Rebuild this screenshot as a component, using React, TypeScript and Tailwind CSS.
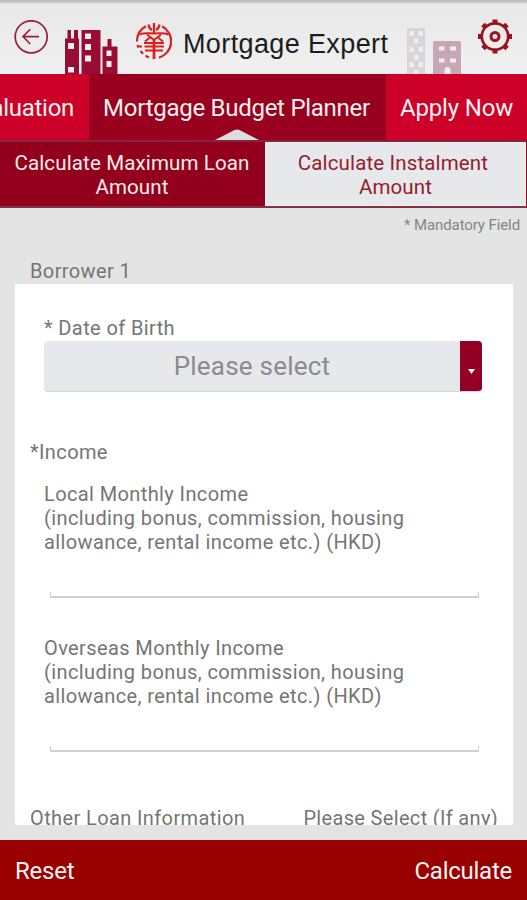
// File: src/App.tsx
// Mortgage budget planner screen

import { memo } from 'react';

const BackIcon = () => (
    <svg className="mt-5 ml-3.5 h-[35px] w-[35px] shrink-0" viewBox="0 0 35 35" fill="none" stroke="#9c1c38">
        <circle cx="17.2" cy="16.8" r="16" strokeWidth="1.7" />
        <path d="M25 16.6H9.5M16.2 9.3L9 16.6l7.2 7.4" strokeWidth="1.6" />
    </svg>
);

const RedBuildings = () => (
    <svg className="ml-[15px] h-[74px] w-[54px] shrink-0" viewBox="0 0 54 74">
        <g fill="#990c33">
            <path d="M1 38.5h2.5V30h3.5v8.5h3V30h4v8.5h1V74H1z" />
            <path d="M17.5 30h19v44h-19z" />
            <path d="M38.5 46.5h5V39h4v7.5h6V74h-15z" />
        </g>
        <g fill="#f6eef0">
            <path d="M4 43h6v6H4zM4 67h6v5.5H4zM21 33.5h6v5.5h-6zM21 44h6v6h-6zM21 55.5h6v6h-6zM42.5 50.5h5v5.5h-5zM42.5 61h5v6h-5z" />
        </g>
    </svg>
);

const BankLogo = () => (
    <svg className="mt-[22px] ml-4 h-[38px] w-[38px] shrink-0" viewBox="0 0 38 38" fill="none" stroke="#d9201f" strokeWidth="2">
        {/* broken ring */}
        <path d="M12 4.2A17 17 0 0 0 3 19.5M28 4.2A17 17 0 0 1 25 35.6M3.5 23l.8 2.5M6.5 29l2.5 2.8M11.5 33.8l3.5 1.7" strokeWidth="2.2" />
        <path d="M20 1v10.5M14.500 2.500c.3 2.500 1.500 4.500 3.500 5.500M25.500 2.500c-.3 2.500-1.500 4.500-3.500 5.500" strokeWidth="2.2" />
        <path d="M5.5 12.5C10 10.5 14 11.5 20 11.5s10-1 14.5 1" />
        <path d="M13 12.5L20 18l7-5.5M16 15.5l-5 4M24 15.5l5 4" />
        <path d="M10 21h20M3.5 24.5H8M10.5 24.5h19.5M11 28.5h18" />
        <path d="M20 17.5V37" strokeWidth="2.8" />
    </svg>
);

const FadedBuildings = () => (
    <svg className="ml-[17px] h-[74px] w-[58px] shrink-0" viewBox="0 0 58 74">
        <path fill="#d8d6d9" d="M2 28h18v46H2z" />
        <path
            fill="#eeeef0"
            d="M4.5 31H9v5H4.5zM13.5 31H18v5h-4.5zM9 38.5h4.5v5H9zM4.5 47H9v5H4.5zM13.5 47H18v5h-4.5zM9 55h4.5v5H9zM4.5 62H9v5H4.5zM13.5 62H18v5h-4.5zM9 70h4.5v4H9z"
        />
        <path fill="#c8a7b4" d="M28 43a2 2 0 0 1 2-2h24a2 2 0 0 1 2 2v31H28z" />
        <path fill="#f2edef" d="M34 46.5h5.5v4H34zM45 46.5h6v4h-6zM34 58.5h5.5v4H34zM45 58.5h6v4h-6zM39.5 74v-4a3 3 0 0 1 6 0v4z" />
    </svg>
);

const TEETH = [0, 45, 90, 135, 180, 225, 270, 315];

const GearIcon = () => (
    <svg className="mt-[19px] ml-3.5 h-9 w-9 shrink-0" viewBox="0 0 36 36" fill="none" stroke="#98131f">
        <circle cx="18" cy="17.5" r="13.2" strokeWidth="2.7" />
        <circle cx="18" cy="17.5" r="4" strokeWidth="3" />
        {TEETH.map((angle) => (
            <path key={angle} d="M18 0.5v4" strokeWidth="5" transform={`rotate(${angle} 18 17.5)`} />
        ))}
    </svg>
);

const Header = memo(function Header() {
    return (
        <header className="flex h-[74px] shrink-0 overflow-hidden bg-[linear-gradient(180deg,#b9b9b9_0px,#c4c4c4_2px,#e8e8e8_4px,#ebebeb_30px,#f0f0f0_74px)]">
            <BackIcon />
            <RedBuildings />
            <BankLogo />
            <h1 className="mt-7 ml-[11px] w-[205px] shrink-0 font-['Liberation_Sans'] text-[27px] leading-8 tracking-[0.38px] whitespace-nowrap text-[#1c1c1c]">
                Mortgage Expert
            </h1>
            <FadedBuildings />
            <GearIcon />
        </header>
    );
});

const MainTabs = () => (
    <nav className="flex h-[68px] shrink-0 overflow-hidden border-b-2 border-[#83263a] bg-[#cc0029] text-[24px] leading-[68px] whitespace-nowrap text-[#fff1ec]">
        <div className="flex w-[89px] shrink-0 justify-end overflow-hidden pr-[15px] tracking-[-0.3px]">Valuation</div>
        <div className="relative w-[297px] shrink-0 bg-[#99001f] pr-0.5 text-center tracking-[-0.27px]">
            Mortgage Budget Planner
            <svg className="absolute bottom-0 left-[126px] h-[11px] w-[44px]" viewBox="0 0 44 11">
                <path d="M0 11L19.5 1q2.5-1 5 0L44 11z" fill="#dedddd" />
            </svg>
        </div>
        <div className="flex-1 text-center tracking-[-0.15px]">Apply Now</div>
    </nav>
);

const SubTabs = () => (
    <div className="flex h-[66px] shrink-0 border-b-2 border-[#8b3044] bg-[#92001e] text-center text-[20.5px] leading-6 tracking-[0.14px]">
        <div className="w-[265px] pt-[9px] pr-px text-[#fdeee8]">
            Calculate Maximum Loan
            <br />
            Amount
        </div>
        <div className="mr-px flex-1 border border-[#f3f3f5] bg-[#e7e8eb] pt-2 text-[#951d2b]">
            <span className="mr-[5px]">Calculate Instalment</span>
            <br />
            Amount
        </div>
    </div>
);

interface IncomeFieldProps {
    title: string;
    className: string;
}

const IncomeField = ({ title, className }: IncomeFieldProps) => (
    <div className={className}>
        <p>
            {title}
            <br />
            (including bonus, commission, housing
            <br />
            allowance, rental income etc.) (HKD)
        </p>
        <div className="mt-[38px] ml-1.5 h-1.5 w-[429px] border-x border-b-2 border-[#d0d0d0]" />
    </div>
);

export default function App() {
    return (
        <div className="flex h-[900px] w-[527px] flex-col overflow-hidden bg-[#e4e4e4] font-[Roboto,sans-serif] text-[20px] leading-6 tracking-[0.39px] text-[#757575]">
            <Header />
            <MainTabs />
            <SubTabs />

            <p className="mt-[7px] pr-[7px] text-right text-[15px] leading-5 tracking-[-0.1px] text-[#858585]">* Mandatory Field</p>
            <h2 className="mt-6 ml-[30px] leading-6">Borrower 1</h2>

            {/* Borrower form */}
            <main className="mt-[1px] mr-3.5 ml-[15px] h-[541px] shrink-0 overflow-hidden bg-white">
                <div className="mt-8 ml-[29px]">
                    <p>* Date of Birth</p>
                    <div className="mt-px flex h-[51px] w-[438px] overflow-hidden rounded-[4px] border-b border-[#d6d7da] bg-[#e7e8ec]">
                        <span className="flex-1 text-center text-[26px] leading-[50px] tracking-[0.23px] text-[#8b8b8d]">Please select</span>
                        <span className="flex w-[22px] items-center justify-center bg-[#930023]">
                            <svg className="mt-2.5 h-[5px] w-[7px]" viewBox="0 0 7 5">
                                <path d="M0 0h7L3.5 5z" fill="#fff" />
                            </svg>
                        </span>
                    </div>
                </div>

                <p className="mt-12 ml-[15px]">*Income</p>
                <IncomeField title="Local Monthly Income" className="mt-[18px] ml-[29px]" />
                <IncomeField title="Overseas Monthly Income" className="mt-[38px] ml-[29px]" />

                <div className="mt-[54px] mr-[15px] ml-[15px] flex justify-between">
                    <span>Other Loan Information</span>
                    <span className="tracking-[0.33px]">Please Select (If any)</span>
                </div>
            </main>

            <footer className="mt-auto flex h-[60px] shrink-0 items-center justify-between bg-[#990000] px-[15px] pt-0.5 text-[24px] tracking-[-0.25px] text-[#fff4f2]">
                <span>Reset</span>
                <span>Calculate</span>
            </footer>
        </div>
    );
}
